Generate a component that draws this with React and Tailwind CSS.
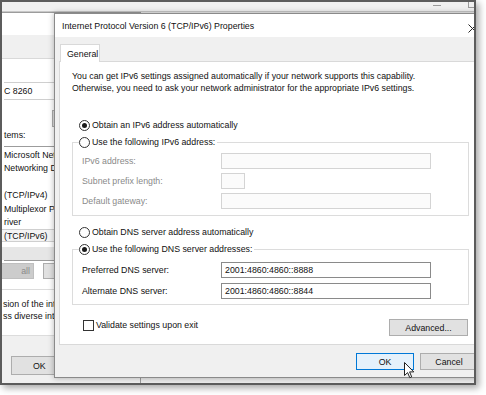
import React from 'react';

const Radio = ({ checked }) => (
  <span className="w-[11px] h-[11px] rounded-full border border-[#333333] bg-white flex items-center justify-center shrink-0">
    {checked && <span className="w-[5px] h-[5px] rounded-full bg-[#1a1a1a]" />}
  </span>
);

const Field = ({ label, value, disabled, narrow }) => (
  <div className="flex items-center h-[16px]">
    <span className={`w-[139px] ${disabled ? 'text-[#8a8a8a]' : 'text-[#111111]'}`}>{label}</span>
    <div
      className={`h-[16px] ${narrow ? 'w-[24px]' : 'w-[210px]'} border flex items-center pl-[3px] ${
        disabled ? 'border-[#d4d4d4] bg-[#fbfbfb]' : 'border-[#8a8a8a] bg-white'
      }`}
    >
      {value}
    </div>
  </div>
);

const Button = ({ children, className = '' }) => (
  <div className={`h-[17px] border border-[#adadad] bg-[#e1e1e1] flex items-center justify-center ${className}`}>
    {children}
  </div>
);

// the Ethernet properties window sitting behind the dialog; only its left strip shows
const EthernetWindow = () => (
  <div className="absolute left-[-2px] top-[10px] w-[141px] h-[380px] border border-[#9c9c9c] bg-[#f0f0f0] flex flex-col">
    <div className="h-[22px] bg-white" />
    <div className="h-[23px]" />
    <div className="h-[278px] bg-white border-t border-[#d9d9d9] flex flex-col pl-[3px] whitespace-nowrap">
      <div className="mt-[23px] h-[18px] border border-[#cfcfcf] border-l-0 w-[60px] flex items-center">C 8260</div>
      <div className="mt-[10px] ml-[48px] w-[30px] h-[17px] border border-[#adadad] bg-[#e1e1e1]" />
      <div className="mt-[1px] h-[14px] flex items-center">tems:</div>
      <div className="mt-[4px] h-[116px] w-[90px] border-y border-[#9c9c9c] bg-white flex flex-col pt-[1px]">
        <div className="h-[13.5px] flex items-center">Microsoft Netw</div>
        <div className="h-[13.5px] flex items-center">Networking Dri</div>
        <div className="h-[13.5px]" />
        <div className="h-[13.5px] flex items-center">(TCP/IPv4)</div>
        <div className="h-[13.5px] flex items-center">Multiplexor Pro</div>
        <div className="h-[13.5px] flex items-center">river</div>
        <div className="h-[13.5px] flex items-center border border-[#cfcfcf] bg-[#f4f4f4] -ml-[3px] pl-[2px]">(TCP/IPv6)</div>
        <div className="mt-auto h-[13px] bg-[#e6e6e6] -ml-[3px]" />
      </div>
      <div className="mt-[2px] flex gap-[9px] -ml-[3px]">
        <div className="w-[33px] h-[16px] border border-[#bfbfbf] bg-[#cccccc] text-[#8a8a8a] flex items-center justify-end pr-[3px]">all</div>
        <div className="w-[40px] h-[16px] border border-[#adadad] bg-[#e1e1e1]" />
      </div>
      <div className="mt-[10px] h-[47px] border-t border-b border-[#dcdcdc] flex flex-col pt-[8px] -ml-[3px] pl-[2px]">
        <div className="h-[12px]">sion of the inte</div>
        <div className="h-[12px]">ss diverse inte</div>
      </div>
    </div>
    <div className="mt-[20px] ml-[10px] w-[60px] h-[19px] border border-[#adadad] bg-[#e1e1e1] flex items-center pl-[21px]">OK</div>
  </div>
);

const Cursor = () => (
  <svg className="absolute left-[402px] top-[360px]" width="11" height="17" viewBox="0 0 11 17">
    <path d="M0.5 0.5 L0.5 13.5 L3.6 10.6 L5.8 15.7 L7.7 14.9 L5.6 9.9 L9.8 9.9 Z" fill="#ffffff" stroke="#222222" strokeWidth="1" strokeLinejoin="round" />
  </svg>
);

const App = () => {
  return (
    <div className="w-[486px] h-[395px] bg-white relative overflow-hidden font-['Liberation_Sans',Arial,sans-serif] text-[8.8px] leading-[12px] text-[#111111]">
      <div className="absolute left-0 top-0 w-[476px] h-[385px] border-2 border-[#5c5c5c] bg-[#ececec] overflow-hidden shadow-[3px_3px_7px_rgba(0,0,0,0.35)]">
        {/* far window title strip */}
        <div className="h-[10px] bg-[#f0f0f0] border-b border-[#c8c8c8] relative">
          <div className="absolute left-[431px] top-[3px] w-[8px] h-px bg-[#9a9a9a]" />
          <div className="absolute left-[466px] top-[-1px] w-[8px] h-[7px] border border-[#9a9a9a]" />
        </div>

        <EthernetWindow />

        {/* IPv6 dialog */}
        <div className="absolute left-[52px] top-[11px] w-[436px] h-[365px] border border-[#8a8a8a] bg-[#f0f0f0] shadow-[0_0_6px_rgba(0,0,0,0.3)] flex flex-col">
          <div className="h-[23px] bg-white flex items-center pl-[7px] relative shrink-0">
            <span>Internet Protocol Version 6 (TCP/IPv6) Properties</span>
            <svg className="absolute left-[413px] top-[10px]" width="9" height="9" viewBox="0 0 9 9">
              <path d="M0.5 0.5 L8.5 8.5 M8.5 0.5 L0.5 8.5" stroke="#222222" strokeWidth="1" />
            </svg>
          </div>

          <div className="flex-1 px-[4px] pt-[7px] flex flex-col">
            <div className="flex">
              <div className="ml-[1px] w-[40px] h-[18px] bg-white border border-b-0 border-[#d9d9d9] flex items-center pl-[6px] relative z-10 -mb-px">
                General
              </div>
            </div>

            <div className="h-[284px] bg-white border border-[#d9d9d9] flex flex-col pl-[12px] pt-[8px]">
              <p className="whitespace-nowrap">
                You can get IPv6 settings assigned automatically if your network supports this capability.
              </p>
              <p className="whitespace-nowrap">
                Otherwise, you need to ask your network administrator for the appropriate IPv6 settings.
              </p>

              <div className="mt-[25px] ml-[7px] h-[12px] flex items-center gap-[2px]">
                <Radio checked />
                <span>Obtain an IPv6 address automatically</span>
              </div>

              <div className="mt-[11px] w-[397px] border border-[#dcdcdc] flex flex-col pl-[9px] pb-[6px]">
                <div className="-mt-[7px] -ml-[3px] h-[12px] flex">
                  <div className="flex items-center gap-[2px] bg-white pr-[2px]">
                    <Radio />
                    <span>Use the following IPv6 address:</span>
                  </div>
                </div>
                <div className="mt-[5px] flex flex-col gap-[4px]">
                  <Field label="IPv6 address:" disabled />
                  <Field label="Subnet prefix length:" disabled narrow />
                  <Field label="Default gateway:" disabled />
                </div>
              </div>

              <div className="mt-[10px] ml-[7px] h-[12px] flex items-center gap-[2px]">
                <Radio />
                <span>Obtain DNS server address automatically</span>
              </div>

              <div className="mt-[11px] w-[397px] border border-[#dcdcdc] flex flex-col pl-[9px] pb-[5px]">
                <div className="-mt-[7px] -ml-[3px] h-[12px] flex">
                  <div className="flex items-center gap-[2px] bg-white pr-[2px]">
                    <Radio checked />
                    <span>Use the following DNS server addresses:</span>
                  </div>
                </div>
                <div className="mt-[7px] flex flex-col gap-[5px]">
                  <Field label="Preferred DNS server:" value="2001:4860:4860::8888" />
                  <Field label="Alternate DNS server:" value="2001:4860:4860::8844" />
                </div>
              </div>

              <div className="mt-[14px] w-[397px] flex items-start">
                <div className="ml-[11px] flex items-center gap-[2px] h-[12px]">
                  <span className="w-[11px] h-[11px] border border-[#333333] bg-white" />
                  <span>Validate settings upon exit</span>
                </div>
                <Button className="ml-auto mr-[1px] w-[79px] h-[17px]">Advanced...</Button>
              </div>
            </div>

            <div className="mt-[8px] flex justify-end gap-[6px] mr-[7px]">
              <div className="w-[58px] h-[17px] border border-[#0078d7] bg-[#e5f1fb] flex items-center justify-center">OK</div>
              <Button className="w-[58px]">Cancel</Button>
            </div>
          </div>
        </div>

        <Cursor />
      </div>
    </div>
  );
};

export default App;
